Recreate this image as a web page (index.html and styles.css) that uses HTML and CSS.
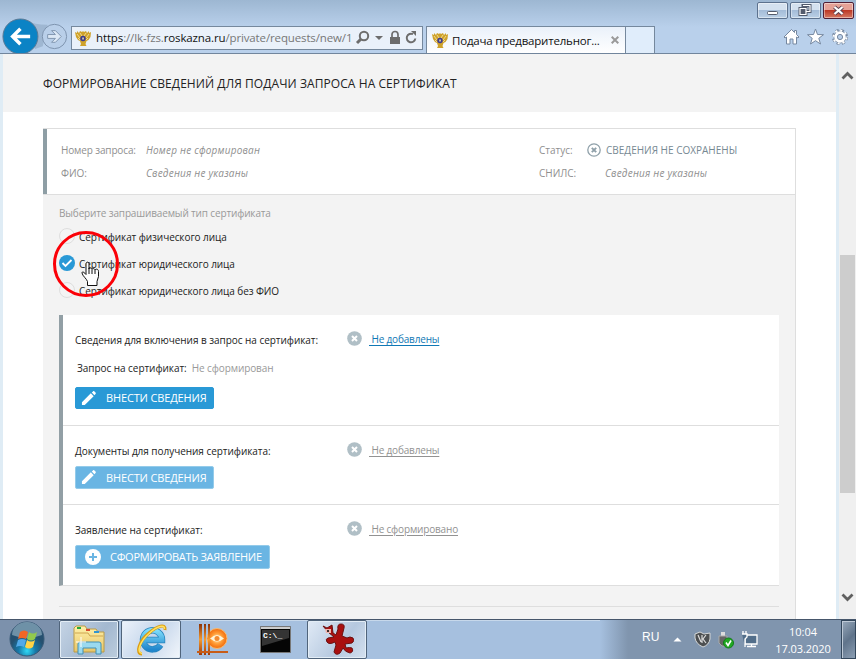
FILE: index.html
```html
<!DOCTYPE html>
<html lang="ru">
<head>
<meta charset="utf-8">
<title>Подача предварительного запроса</title>
<link rel="stylesheet" href="styles.css">
</head>
<body>
<svg class="defs" width="0" height="0">
  <defs>
    <symbol id="eagle" viewBox="0 0 16 16"><path fill="#cfa22b" d="M0 2l2 1 0-2 2 2 1-2 2 1 1-1 1 1 2-1 1 2 2-2 0 2 2-1-.500 5-2 3-2 1-1 3 1 2H5l1-2-1-3-2-1-2-3z"/><path stroke="#f8e7a8" fill="none" stroke-width=".8" d="M2 4l3 4M14 4l-3 4M5 3l2 3M11 3L9 6M3 8l2 2M13 8l-2 2"/><circle cx="8" cy="8.500" r="2.700" fill="#3b3a91"/><path fill="#efe4a2" d="M7.300 7.500h1.500v2H7.300z"/></symbol>
    <symbol id="pen" viewBox="0 0 16 16"><path fill="#fff" d="M1 12l9.500-9.500 3 3L4 15H1zM11.500 1.700L12.800.5c.5-.5 1-.5 1.500 0l1.200 1.200c.5.500.5 1 0 1.500l-1.200 1.300z"/></symbol>
    <symbol id="cross" viewBox="0 0 15 15"><circle cx="7.500" cy="7.500" r="7.300" fill="#b0bfc6"/><path d="M5 5l5 5m0-5l-5 5" stroke="#fff" stroke-width="2"/></symbol>
    <linearGradient id="folder" x2="0" y2="1"><stop stop-color="#fff1aa"/><stop offset="1" stop-color="#e8c568"/></linearGradient>
    <linearGradient id="blue" x2="0" y2="1"><stop stop-color="#7edcfa"/><stop offset="1" stop-color="#2187cd"/></linearGradient>
    <radialGradient id="orb" cy=".85"><stop stop-color="#30d9f5"/><stop offset=".5" stop-color="#1679a9"/><stop offset="1" stop-color="#25506f"/></radialGradient>
    <radialGradient id="orange"><stop stop-color="#fff2c5"/><stop offset=".55" stop-color="#ff9b35"/><stop offset="1" stop-color="#f26a0c"/></radialGradient>
    <linearGradient id="rust" x2="0" y2="1"><stop stop-color="#8c3206"/><stop offset=".5" stop-color="#f39a31"/><stop offset="1" stop-color="#9f3908"/></linearGradient>
  </defs>
</svg>

<header class="chrome">
  <svg class="nav" width="71" height="36" viewBox="0 0 71 36">
    <path d="M26 2q8 5 22 5l-5 22-8 3z" fill="#9fb7d2"/>
    <circle cx="20" cy="19" r="18" fill="#0b83c5" stroke="#5c7994"/>
    <path d="M30 19H12m8-8l-8 8 8 8" fill="none" stroke="#fff" stroke-width="3.600"/>
    <circle cx="55" cy="19" r="12.500" fill="#b9cfe9" stroke="#7d93ad"/>
    <path d="M48 17h8l-4-4h4l6 6-6 6h-4l4-4h-8z" fill="#dce8f5" stroke="#8096af"/>
  </svg>
  <div class="address">
    <svg width="16" height="16"><use href="#eagle"/></svg>
    <span class="url"><b>https</b>://lk-fzs.<b>roskazna.ru</b>/private/requests/new/1</span>
    <svg class="tools" width="66" height="16" viewBox="0 0 66 16" fill="none" stroke="#6d6d6d">
      <circle cx="9" cy="6" r="4.200" stroke-width="2"/><path d="M6 9l-4 4" stroke-width="3"/>
      <path d="M20 6h8l-4 4z" fill="#6d6d6d" stroke="none"/>
      <path d="M35 7h10v7H35z" fill="#6d6d6d" stroke="none"/><path d="M37 8V4.500a3 3 0 0 1 6 0V8" stroke-width="1.700"/>
      <path d="M58 4.200a4.300 4.300 0 1 0 2.300 4.300" stroke-width="2"/><path d="M56 1l5 0v5z" fill="#6d6d6d" stroke="none"/>
    </svg>
  </div>
  <div class="tab"><svg width="16" height="16"><use href="#eagle"/></svg><span>Подача предварительног...</span><svg class="tab-x" width="8" height="8" viewBox="0 0 8 8"><path d="M.7.7l6.600 6.600m0-6.600L.7 7.300" stroke="#9a9a9a" stroke-width="2"/></svg></div>
  <div class="newtab"></div>
  <div class="right">
    <div class="winbtns">
      <div class="win"><svg width="29" height="15"><rect x="9.500" y="8.500" width="10" height="3" rx="1" fill="#fff" stroke="#535b6c"/></svg></div>
      <div class="win"><svg width="29" height="15" fill="none"><path d="M12 2.500h7v6h-7zM9 5.500h6v6H9z" stroke="#535b6c" stroke-width="3"/><path d="M12 2.500h7v6h-4M9 5.500h6v6H9z" stroke="#fff" stroke-width="1.200"/></svg></div>
      <div class="win close"><svg width="29" height="15" fill="none"><path d="M10.500 4l8 7m0-7l-8 7" stroke="#5b4050" stroke-width="4"/><path d="M10.500 4l8 7m0-7l-8 7" stroke="#fff" stroke-width="2.300"/></svg></div>
    </div>
    <svg class="quick" width="68" height="18" viewBox="0 0 68 18" fill="#fff" stroke="#7688a0">
      <path d="M2 9l7.500-7.500 3 3V2.500h2v4L17 9l-1 1-1.500-1v7h-3.500v-5H8v5H4.500V9L3 10z"/>
      <path d="M33.500 1l2 5.500 6 .2-4.700 3.600 1.700 5.700-5-3.300-5 3.300 1.700-5.700-4.700-3.600 6-.2z"/>
      <circle cx="58" cy="9" r="6.300" stroke="#7688a0" stroke-width="3.600" stroke-dasharray="2.900 2.050"/><circle cx="58" cy="9" r="4.600" stroke="#7688a0" stroke-width="3.800"/><circle cx="58" cy="9" r="4.600" stroke="#fff" stroke-width="2.300"/><circle cx="58" cy="9" r="6.500" fill="none" stroke="#fff" stroke-width="2" stroke-dasharray="2 2.950" stroke-dashoffset="-.4"/><circle cx="58" cy="9" r="2.600" fill="#b9cfe9"/>
    </svg>
  </div>
</header>

<main class="viewport">
  <div class="page">
    <div class="pagehead"><h1>ФОРМИРОВАНИЕ СВЕДЕНИЙ ДЛЯ ПОДАЧИ ЗАПРОСА НА СЕРТИФИКАТ</h1></div>
    <div class="card">
      <div class="info">
        <span class="number">Номер запроса:</span><i>Номер не сформирован</i><span>Статус:</span>
        <strong class="status"><svg width="14" height="14" viewBox="0 0 14 14" fill="none" stroke="#8fa0a9"><circle cx="7" cy="7" r="6.200" stroke-width="1.300"/><path d="M4.800 4.800l4.400 4.400m0-4.400L4.800 9.200" stroke-width="1.900"/></svg><span>СВЕДЕНИЯ НЕ СОХРАНЕНЫ</span></strong>
        <span>ФИО:</span><i>Сведения не указаны</i><span>СНИЛС:</span><i class="snils">Сведения не указаны</i>
      </div>
      <div class="choice">
        <p class="hint">Выберите запрашиваемый тип сертификата</p>
        <div class="radio"><span class="dot"></span><span>Сертификат физического лица</span></div>
        <div class="radio"><span class="dot on"><svg width="16" height="16" viewBox="0 0 16 16"><path d="M3.500 8l3 3 6-6" fill="none" stroke="#fff" stroke-width="1.800"/></svg></span><span>Сертификат юридического лица</span></div>
        <div class="radio"><span class="dot"></span><span>Сертификат юридического лица без ФИО</span></div>
        <svg class="pointer" width="68" height="68" viewBox="0 0 68 68">
          <circle cx="34" cy="34" r="31.500" fill="none" stroke="#fb0007" stroke-width="3"/>
          <path d="M35.500 51.500c-1-3-5-5.500-5.500-8.500 0-2 2-1 4 1.500V34c0-2.500 3-2.500 3 0v5c0-1.500 3-1.500 3 .5 0-1.500 3-1 3 .500 1-1.500 3.500-1 3.500 1.500v5l-1.500 5v4h-9.500z" fill="#fff" stroke="#111"/><path d="M37 38v6M40 40v4M43 40v4" stroke="#111"/>
        </svg>
      </div>
      <div class="panel">
        <section class="s1">
          <div class="line"><span class="name">Сведения для включения в запрос на сертификат:</span><svg width="15" height="15"><use href="#cross"/></svg><a class="active">&nbsp;Не добавлены</a></div>
          <p class="request">Запрос на сертификат:<em>Не сформирован</em></p>
          <div class="btn strong"><svg width="15" height="15"><use href="#pen"/></svg><span>ВНЕСТИ СВЕДЕНИЯ</span></div>
        </section>
        <section class="s2">
          <div class="line"><span class="name">Документы для получения сертификата:</span><svg width="15" height="15"><use href="#cross"/></svg><a>&nbsp;Не добавлены</a></div>
          <div class="btn"><svg width="15" height="15"><use href="#pen"/></svg><span>ВНЕСТИ СВЕДЕНИЯ</span></div>
        </section>
        <section class="s3">
          <div class="line"><span class="name">Заявление на сертификат:</span><svg width="15" height="15"><use href="#cross"/></svg><a>&nbsp;Не сформировано</a></div>
          <div class="btn wide"><svg width="16" height="16" viewBox="0 0 16 16"><circle cx="8" cy="8" r="8" fill="#fff"/><path d="M4 8h8M8 4v8" stroke="#6ab5e3" stroke-width="2"/></svg><span>СФОРМИРОВАТЬ ЗАЯВЛЕНИЕ</span></div>
        </section>
      </div>
      <div class="rule"></div>
    </div>
  </div>
  <div class="scroll">
    <svg width="13" height="9" viewBox="0 0 13 9"><path d="M1.500 7.500l5-5 5 5" fill="none" stroke="#606060" stroke-width="2.800"/></svg>
    <div class="thumb"></div>
    <svg width="13" height="9" viewBox="0 0 13 9"><path d="M1.500 1.500l5 5 5-5" fill="none" stroke="#606060" stroke-width="2.800"/></svg>
  </div>
</main>

<footer class="taskbar">
  <div class="start"><svg width="36" height="36" viewBox="0 0 36 36"><circle cx="18" cy="18" r="17" fill="url(#orb)" stroke="#365875"/><path d="M3 14a15 13 0 0 1 30 0q-15 6-30 0" fill="#c7dfeb" opacity=".45"/><path d="M11 11q4-3 8 0l-2 7q-4-2-8 0z" fill="#f16625"/><path d="M20 11q4 3 8 0l-2 7q-4 3-8 0z" fill="#91c94d"/><path d="M9 19q4-2 8 0l-2 7q-4-2-8 0z" fill="#51a9e8"/><path d="M18 19q4 3 8 0l-2 7q-4 3-8 0z" fill="#ffd346"/></svg></div>
  <div class="task framed"><svg width="34" height="32" viewBox="0 0 34 32"><path d="M2 28V4l2-2h9l2 3h9l2 3h6v20z" fill="url(#folder)" stroke="#b99a47"/><path d="M3 9h13l2 3h13" fill="none" stroke="#cda650"/><path d="M5 3h4v2H5z" fill="#26a83a"/><path d="M14 5h4v2h-4z" fill="#d94b2d"/><path d="M22 7h5v2h-5z" fill="#3295d0"/><path d="M6 30V20q0-2 2-2h19q2 0 2 2v10h-5v-6H11v6z" fill="#9ad9ef" stroke="#408fb5"/><path d="M9 13v10M4 18h10" stroke="#fff"/></svg></div>
  <div class="task framed current"><svg width="34" height="34" viewBox="0 0 34 34"><path d="M26.500 22a9.500 9.500 0 1 1 1.500-5H11" fill="none" stroke="#2884bd" stroke-width="6.500"/><path d="M26.500 22a9.500 9.500 0 1 1 1.500-5H11" fill="none" stroke="url(#blue)" stroke-width="5"/><path d="M8 31c-7 0-3-13 7-21C23 3 32 0 31 7" fill="none" stroke="#dc9d11" stroke-width="3"/><path d="M8 30.500c-6-1-2-12 7-20C23 3 31 1 30.500 6" fill="none" stroke="#ffe260" stroke-width="1.500"/></svg></div>
  <div class="task stripes"><svg width="34" height="33" viewBox="0 0 34 33"><circle cx="21" cy="15.500" r="10" fill="url(#orange)" stroke="#f7ba70"/><path d="M14 15.500q7-7 14 0-7 6-14 0" fill="#fff5d9"/><circle cx="21" cy="15.500" r="2.500" fill="#f28b32"/><path d="M3 1h3v31H3zM8 1h2v31H8zM12 1h2v31h-2z" fill="url(#rust)"/><path d="M1 28h31v2H1z" fill="#c85c17"/></svg></div>
  <div class="task console"><svg width="31" height="27" viewBox="0 0 31 27"><path d="M.5.500h30v26H.5z" fill="#050505" stroke="#777"/><path d="M1 1h29v2H1z" fill="#ccc"/><path d="M2 4h27v8L2 20z" fill="#343434"/><text x="3" y="12" fill="#fff" font-family="Liberation Mono" font-size="8" font-weight="bold">C:\_</text></svg></div>
  <div class="task framed app"><svg width="34" height="34" viewBox="0 0 34 34"><path d="M3 3l4 2 5-3 1 8 3 2 2-6q-1-5 3-5t3 4l-2 8 5 2q3-2 6 0 2 3-1 5l-7 1 1 4q4-1 6 0 2 4-2 5-5-1-7-5l-3 5q-4 3-6-1l2-7-1-3q-6 3-8 0t1-4l6-1-6-5z" fill="#a90f0f" stroke="#6b1010"/><path d="M5 6h6v4H6z" fill="#f0b3ac"/><circle cx="8" cy="8" r="1"/></svg></div>
  <div class="tray">
    <span class="lang">RU</span>
    <svg width="9" height="5"><path d="M.5 4.500l4-4 4 4z" fill="#fff"/></svg>
    <svg width="17" height="17" viewBox="0 0 17 17"><path d="M1 3l5-2 4 2 6-1v6q-1 6-7 8-7-3-8-9z" fill="#4d5052" stroke="#d6d8d8"/><path d="M8 4v8m4-8l-3 4 3 4M4 4l3 7" fill="none" stroke="#ddd" stroke-width="1.200"/></svg>
    <svg width="18" height="18" viewBox="0 0 18 18"><path d="M4 1h4v4H4z" fill="#ddd"/><path d="M2 5h8v7l-2 3H5l-3-3z" fill="#666" stroke="#aaa"/><circle cx="11.500" cy="12" r="5" fill="#22a923" stroke="#127b19"/><path d="M9 11.500l2 3 3-5" fill="none" stroke="#fff" stroke-width="1.600"/></svg>
    <svg width="17" height="17" viewBox="0 0 17 17" fill="#526e8a" stroke="#fff" stroke-width="1.300"><path d="M4 4h12v9H4zM6 15.500h9M10.500 13v3"/><path d="M1 3h5v3L4 8v8M2 0v3m3-3v3"/></svg>
    <div class="clock"><span>10:04</span><span>17.03.2020</span></div>
    <div class="desktop"></div>
  </div>
</footer>
</body>
</html>
```

FILE: styles.css
```css
* { box-sizing: border-box; }
body { margin: 0; width: 856px; height: 659px; overflow: hidden; display: flex; flex-direction: column; font: 10px/14px "Open Sans", "Noto Sans", sans-serif; color: #222; background: #fff; }
svg { flex: none; display: block; }
.defs { position: absolute; }
h1, p { margin: 0; font-weight: normal; }

.chrome { height: 54px; flex: none; display: flex; align-items: flex-end; background: linear-gradient(#9db7d2, #b9d0eb 27px); border-bottom: 1px solid #71859c; }
.nav { width: 71px; height: 35px; }
.address { width: 352px; height: 24px; margin-bottom: 3px; border: 1px solid #75889d; background: #eaf1fa; display: flex; align-items: center; padding-left: 3px; }
.url { width: 256px; margin-left: 5px; overflow: hidden; white-space: nowrap; color: #777; font: 11.500px/20px "Open Sans", sans-serif; letter-spacing: -.13px; }
.url b { color: #111; font-weight: normal; }
.tools { margin-left: 3px; }
.tab { width: 200px; height: 27px; margin-left: 3px; border: 1px solid #75889d; border-bottom: 0; background: linear-gradient(#eaf1fa, #fff); display: flex; align-items: center; padding-left: 5px; color: #111; font: 11.500px/20px "Open Sans", sans-serif; }
.tab span { margin-left: 4px; width: 154px; white-space: nowrap; letter-spacing: -.2px; padding-top: 2px; }
.tab-x { margin-left: 5px; }
.newtab { width: 29px; height: 27px; background: #e0edfb; border: 1px solid #75889d; border-width: 1px 1px 0 0; }
.right { width: 201px; height: 53px; display: flex; flex-direction: column; align-items: flex-end; }
.winbtns { display: flex; gap: 2px; padding: 2px 2px 0 0; }
.win { width: 31px; height: 17px; border: 1px solid #5d728e; border-radius: 2px; background: linear-gradient(#d4e1ef 47%, #a4bcd8 50%, #bad0e6); box-shadow: inset 0 0 0 1px #ffffff70; }
.close { border-color: #501f35; background: linear-gradient(#e5a196 45%, #bd3926 50%, #d57963); }
.quick { margin: 9px 6px 0 0; }

.viewport { height: 565px; flex: none; display: flex; background: #dfecf5; padding-left: 3px; }
.page { width: 833px; height: 565px; background: #fff; margin-right: 3px; }
.pagehead { height: 58px; background: #f3f3f3; padding: 20px 0 0 40px; }
h1 { font: 12px/20px "Open Sans", sans-serif; white-space: nowrap; letter-spacing: .075px; }
.card { width: 753px; height: 491px; margin: 16px 0 0 40px; background: #f3f3f3; border-right: 1px solid #dedede; }
.info { height: 67px; background: #fff; border: solid #dedede; border-width: 1px 0; box-shadow: inset 4px 0 #8e9ea5; padding: 9px 0 0 18px; display: grid; grid-template-columns: 85px 393px 48px 1fr; grid-auto-rows: 23px; align-content: start; align-items: center; color: #8f8f8f; white-space: nowrap; }
.info i { letter-spacing: .21px; }
.info .number { letter-spacing: -.14px; }
.status { display: flex; align-items: center; gap: 5px; color: #768993; font-weight: normal; }
.snils { padding-left: 18px; }
.choice { height: 120px; padding: 8px 0 0 16px; position: relative; }
.hint { height: 20px; line-height: 20px; color: #999; letter-spacing: -.15px; }
.radio { height: 27px; display: flex; align-items: center; gap: 4px; letter-spacing: -.08px; }
.dot { width: 16px; height: 16px; border: 1px solid #dedede; border-radius: 50%; background: #f4f4f4; margin-top: -2px; }
.dot.on { border: 0; background: #2999d6; }
.pointer { position: absolute; left: 9px; top: 35px; }
.panel { width: 720px; height: 271px; margin-left: 16px; background: #fff; border-left: 4px solid #929fa5; border-bottom: 1px solid #dedede; }
section { border-bottom: 1px solid #dedede; padding-left: 12px; }
.s1 { height: 111px; padding-top: 15px; }
.s2 { height: 79px; padding-top: 15px; }
.s3 { height: 80px; padding-top: 15px; border: 0; }
.line { display: flex; align-items: center; height: 17px; white-space: nowrap; }
.name { width: 272px; padding-top: 2px; letter-spacing: -.04px; }
.line a { margin-left: 7px; color: #929292; text-decoration: underline; text-underline-offset: 2px; letter-spacing: -.17px; }
.line a.active { color: #1078b5; }
.request { padding: 14px 0 0 2px; height: 40px; letter-spacing: -.05px; }
.request em { font-style: normal; color: #999; margin-left: 5px; letter-spacing: -.1px; }
.btn { width: 139px; height: 23px; margin-top: 4px; background: #6ab5e3; border: 1px solid #94cbea; border-radius: 2px; display: flex; align-items: center; color: #fff; font-size: 11px; padding-left: 5px; gap: 10px; white-space: nowrap; letter-spacing: -.15px; }
.s1 .btn { margin-top: 0; height: 22px; background: #2999d6; border-color: #2999d6; }
.s2 .btn { margin-top: 8px; }
.btn.wide { width: 195px; height: 24px; margin-top: 8px; padding-left: 9px; gap: 9px; letter-spacing: -.29px; }
.rule { height: 1px; width: 720px; margin: 20px 0 0 16px; background: #dedede; }
.scroll { width: 17px; background: #f0f0f0; display: flex; flex-direction: column; align-items: center; padding-top: 17px; }
.thumb { width: 15px; height: 238px; margin: 175px 0 100px; background: #cdcdcd; }

.taskbar { height: 40px; flex: none; display: flex; align-items: center; background: #a6c0df; border-top: 1px solid #46566b; box-shadow: inset 0 1px #c7d8eb; }
.start { width: 59px; height: 39px; padding: 1px 0 0 9px; background: #7c91ac; }
.task { width: 60px; height: 39px; margin-right: 2px; display: flex; align-items: center; justify-content: center; }
.framed { border: 1px solid #50647b; border-radius: 2px; background: linear-gradient(125deg, #c5d4e5, #a3b8d0 60%, #bccddd); box-shadow: inset 0 0 0 1px #e3edf6; }
.current { background: linear-gradient(125deg, #edf3fb, #c5d6eb 50%, #f2f6fb); }
.app { background: linear-gradient(125deg, #e0eaf6, #b5c8df 60%, #d5e1ef); }
.tray { margin-left: auto; width: 256px; height: 39px; display: flex; align-items: center; background: linear-gradient(90deg, #a6c0df, #8095ae 28px); color: #fff; font: 12px/16px "Open Sans", sans-serif; padding-left: 42px; }
.lang { width: 31px; font: 12px/16px "Liberation Sans", sans-serif; padding-bottom: 5px; }
.tray svg + svg { margin-left: 12px; }
.tray svg + svg + svg { margin-left: 6px; }
.clock { display: flex; flex-direction: column; align-items: center; width: 60px; margin-left: 15px; font-size: 11px; line-height: 17px; letter-spacing: -.05px; }
.desktop { margin-left: auto; width: 15px; height: 39px; border: 1px solid #33475c; background: linear-gradient(135deg, #98a9bb, #60748b 50%, #8c9fb4); box-shadow: inset 1px 1px #bdc9d6; }
```
